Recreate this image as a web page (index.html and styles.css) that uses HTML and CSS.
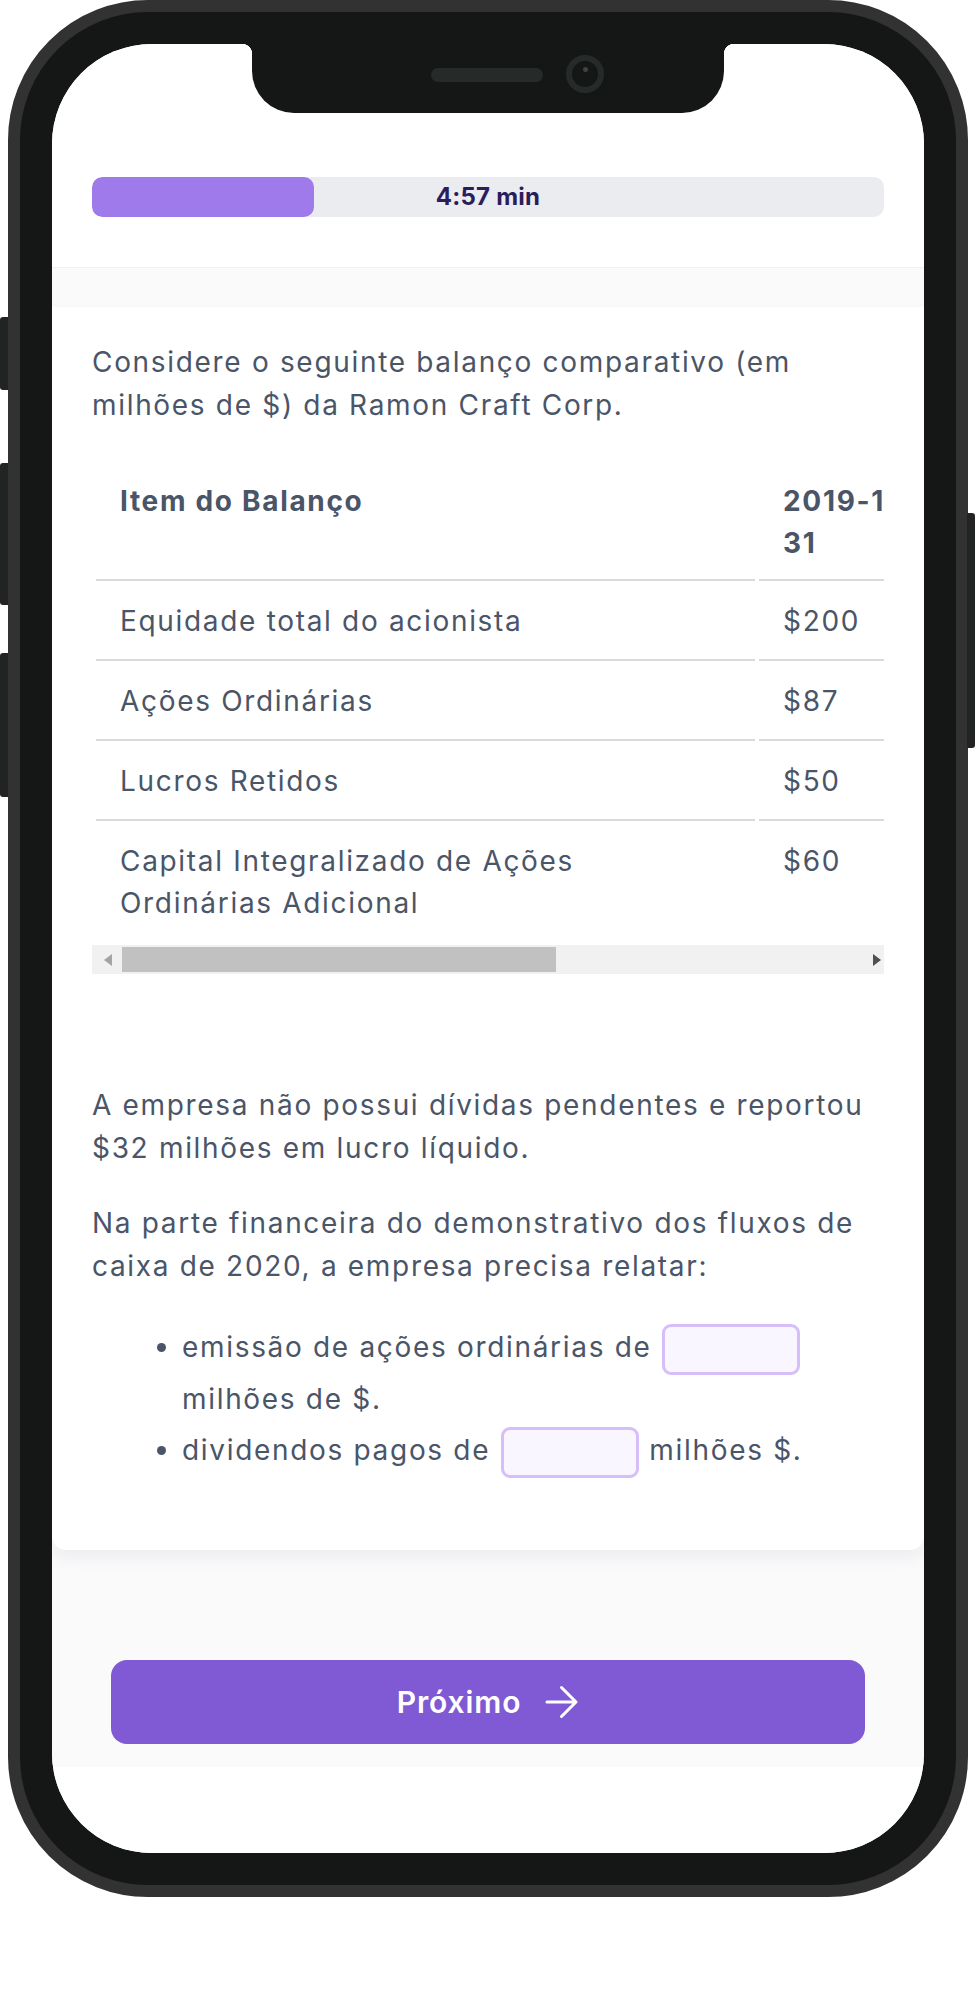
FILE: index.html
```html
<!DOCTYPE html>
<html lang="pt-BR">
<head>
<meta charset="utf-8">
<title>Questão – Fluxos de caixa</title>
<link rel="stylesheet" href="styles.css">
</head>
<body>
<div class="phone">
  <span class="side-btn side-btn--mute"></span>
  <span class="side-btn side-btn--vol-up"></span>
  <span class="side-btn side-btn--vol-down"></span>
  <span class="side-btn side-btn--power"></span>
  <div class="device">
    <div class="screen">
      <div class="notch" aria-hidden="true">
        <span class="speaker"></span>
        <span class="camera"></span>
      </div>

      <header class="top">
        <div class="progress" role="progressbar" aria-valuenow="28" aria-valuemin="0" aria-valuemax="100">
          <div class="progress-fill" style="width:28%"></div>
          <span class="progress-label">4:57 min</span>
        </div>
      </header>

      <main class="content">
        <section class="card">
          <p>Considere o seguinte balanço comparativo (em milhões de $) da Ramon Craft Corp.</p>

          <div class="table-box">
            <div class="table-scroll">
              <table class="balance">
                <thead>
                  <tr>
                    <th class="c-item">Item do Balanço</th>
                    <th class="c-year">2019-12-<wbr>31</th>
                    <th class="c-year">2020-12-<wbr>31</th>
                  </tr>
                </thead>
                <tbody>
                  <tr><td>Equidade total do acionista</td><td>$200</td><td>$229</td></tr>
                  <tr><td>Ações Ordinárias</td><td>$87</td><td>$95</td></tr>
                  <tr><td>Lucros Retidos</td><td>$50</td><td>$62</td></tr>
                  <tr><td>Capital Integralizado de Ações Ordinárias Adicional</td><td>$60</td><td>$72</td></tr>
                </tbody>
              </table>
            </div>
            <div class="scrollbar" aria-hidden="true">
              <span class="sb-btn sb-btn--left"></span>
              <span class="sb-track"><span class="sb-thumb"></span></span>
              <span class="sb-btn sb-btn--right"></span>
            </div>
          </div>

          <p>A empresa não possui dívidas pendentes e reportou $32 milhões em lucro líquido.</p>
          <p>Na parte financeira do demonstrativo dos fluxos de caixa de 2020, a empresa precisa relatar:</p>

          <ul class="answers">
            <li>emissão de ações ordinárias de <input class="blank" type="text" aria-label="emissão de ações ordinárias"> milhões de $.</li>
            <li>dividendos pagos de <input class="blank" type="text" aria-label="dividendos pagos"> milhões $.</li>
          </ul>
        </section>

        <div class="actions">
          <button class="next" type="button">Próximo
            <svg class="next-icon" viewBox="0 0 34 34" aria-hidden="true"><path d="M2 17h29M16.5 2.5 31 17 16.5 31.5"/></svg>
          </button>
        </div>
      </main>

      <div class="home-area"></div>
    </div>
  </div>
</div>
</body>
</html>
```

FILE: styles.css
```css
* { box-sizing: border-box; }

html, body {
  margin: 0;
  padding: 0;
  background: #ffffff;
}

body {
  font-family: Inter, "Noto Sans", "Liberation Sans", sans-serif;
  color: #4a5568;
}

/* ---------- phone frame ---------- */
.phone {
  position: relative;
  width: 976px;
  height: 2004px;
}

.device {
  margin-left: 8px;
  width: 960px;
  height: 1897px;
  border: 12px solid #323232;
  border-radius: 140px;
  background: #151716;
  padding: 32px;
}

.side-btn {
  position: absolute;
  background: #222423;
  width: 8px;
}
.side-btn--mute { left: 0; top: 317px; height: 73px; border-radius: 3px 0 0 3px; }
.side-btn--vol-up { left: 0; top: 463px; height: 142px; border-radius: 3px 0 0 3px; }
.side-btn--vol-down { left: 0; top: 653px; height: 144px; border-radius: 3px 0 0 3px; }
.side-btn--power { left: 967px; top: 513px; height: 235px; border-radius: 0 3px 3px 0; }

.screen {
  position: relative;
  width: 872px;
  height: 1809px;
  border-radius: 100px;
  overflow: hidden;
  background: #ffffff;
  display: flex;
  flex-direction: column;
}

.notch {
  position: absolute;
  top: 0;
  left: 200px;
  width: 472px;
  height: 69px;
  background: #151716;
  border-radius: 0 0 42px 42px;
  display: flex;
  align-items: flex-start;
  padding-left: 179px;
  z-index: 5;
}
.notch::before,
.notch::after {
  content: "";
  position: absolute;
  top: 0;
  width: 10px;
  height: 10px;
}
.notch::before {
  left: -10px;
  background: radial-gradient(circle at 0 100%, transparent 10px, #151716 10.5px);
}
.notch::after {
  right: -10px;
  background: radial-gradient(circle at 100% 100%, transparent 10px, #151716 10.5px);
}

.speaker {
  margin-top: 24px;
  width: 112px;
  height: 14px;
  border-radius: 7px;
  background: #262b2a;
}

.camera {
  position: relative;
  margin-top: 11px;
  margin-left: 23px;
  width: 38px;
  height: 38px;
  border-radius: 50%;
  border: 6px solid #262b2a;
  background: #141716;
}
.camera::after {
  content: "";
  position: absolute;
  left: 10.5px;
  top: 5.5px;
  width: 5px;
  height: 5px;
  border-radius: 50%;
  background: #3d4342;
}

/* ---------- header / progress ---------- */
.top {
  flex: none;
  height: 224px;
  padding: 133px 40px 0;
  border-bottom: 1px solid #f0f1f3;
  background: #ffffff;
}

.progress {
  display: grid;
  align-items: center;
  height: 40px;
  border-radius: 10px;
  background: #ebecf0;
  overflow: hidden;
}
.progress-fill,
.progress-label {
  grid-area: 1 / 1;
}
.progress-fill {
  height: 100%;
  background: #9f7aea;
  border-radius: 10px;
}
.progress-label {
  justify-self: center;
  font-size: 24px;
  font-weight: 700;
  color: #2b1d5c;
  line-height: 1;
  letter-spacing: 0.01em;
}

/* ---------- content ---------- */
.content {
  flex: none;
  background: #fafafb;
  padding: 39px 0 23px;
}

.card {
  background: #ffffff;
  border-radius: 0 0 14px 14px;
  box-shadow: 0 8px 16px rgba(30, 30, 60, 0.06);
  padding: 34px 40px 69px;
  font-size: 28px;
  line-height: 43px;
  letter-spacing: 0.06em;
}

.card p { margin: 0; }
.card p + p { margin-top: 32px; }

.table-box {
  margin: 34px 0 110px;
}

.table-scroll {
  overflow: hidden;
}

.balance {
  table-layout: fixed;
  width: 1071px;
  border-collapse: separate;
  border-spacing: 4px;
  font-size: 28px;
  line-height: 42px;
}

.balance th,
.balance td {
  text-align: left;
  vertical-align: top;
  padding: 15px 24px 17px;
  border-bottom: 2px solid #dadada;
}
.balance th {
  font-weight: 700;
  padding-bottom: 15px;
}
.balance tbody tr:last-child td {
  border-bottom: 0;
}
.c-item { width: 659px; }
.c-year { width: 198px; }

.scrollbar {
  display: flex;
  height: 29px;
  background: #f1f1f1;
}
.sb-btn {
  flex: none;
  width: 30px;
  display: flex;
  align-items: center;
}
.sb-btn::before {
  content: "";
  border-top: 6px solid transparent;
  border-bottom: 6px solid transparent;
}
.sb-btn--left { padding-left: 12px; }
.sb-btn--left::before { border-right: 8px solid #a3a3a3; }
.sb-btn--right { padding-left: 19px; }
.sb-btn--right::before { border-left: 8px solid #505050; }
.sb-track {
  flex: 1;
  padding: 2px 0;
}
.sb-thumb {
  display: block;
  width: 434px;
  height: 100%;
  background: #c1c1c1;
}

.answers {
  margin: 33px 0 0;
  padding-left: 90px;
}
.answers li + li {
  margin-top: 3px;
}

.blank {
  display: inline-block;
  vertical-align: middle;
  width: 138px;
  height: 51px;
  margin: 3px 1px;
  border: 3px solid #d6bff8;
  border-radius: 9px;
  background: #faf6ff;
  font: inherit;
  outline: none;
}

/* ---------- actions ---------- */
.actions {
  margin-top: 110px;
  padding: 0 59px;
}

.next {
  width: 100%;
  height: 84px;
  border: 0;
  border-radius: 16px;
  background: #805ad5;
  color: #ffffff;
  font-family: Inter, "Noto Sans", sans-serif;
  font-size: 30px;
  font-weight: 600;
  letter-spacing: 0.03em;
  display: flex;
  align-items: center;
  justify-content: center;
  gap: 24px;
  cursor: pointer;
}

.next-icon {
  width: 34px;
  height: 34px;
  fill: none;
  stroke: #ffffff;
  stroke-width: 3;
  stroke-linecap: round;
  stroke-linejoin: round;
}

.home-area {
  flex: 1;
  background: #ffffff;
}
```
